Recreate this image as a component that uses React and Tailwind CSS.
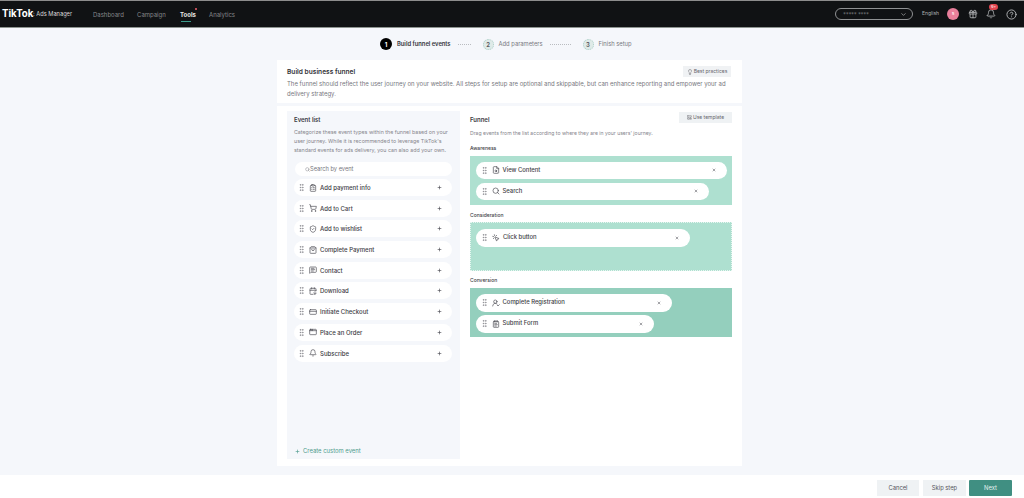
import React from "react";
import {
  ChevronDown,
  Gift,
  Bell,
  CircleHelp,
  GripVertical,
  Plus,
  X,
  Search,
  ClipboardList,
  ShoppingCart,
  ShieldCheck,
  ShoppingBag,
  MessageSquareText,
  CalendarArrowDown,
  CreditCard,
  AppWindow,
  FileSearch,
  MousePointerClick,
  UserRoundCheck,
  NotepadText,
  Lightbulb,
  LayoutTemplate,
} from "lucide-react";

const events = [
  { name: "Add payment info", icon: ClipboardList },
  { name: "Add to Cart", icon: ShoppingCart },
  { name: "Add to wishlist", icon: ShieldCheck },
  { name: "Complete Payment", icon: ShoppingBag },
  { name: "Contact", icon: MessageSquareText },
  { name: "Download", icon: CalendarArrowDown },
  { name: "Initiate Checkout", icon: CreditCard },
  { name: "Place an Order", icon: AppWindow },
  { name: "Subscribe", icon: Bell },
];

const Chip = ({ name, icon: Icon, width }) => {
  return (
    <div
      className="h-[17.5px] bg-white rounded-full flex items-center pl-[4px] pr-[11px] text-[5.9px] font-medium text-[#3c3c44]"
      style={{ width }}
    >
      <GripVertical className="w-[9px] h-[9px] text-[#8a8a90]" />
      <Icon className="w-[8px] h-[8px] ml-[3px] text-[#4a4a52]" />
      <span className="ml-[3px] flex-1">{name}</span>
      <X className="w-[4px] h-[4px] text-[#4a4a52]" strokeWidth={3} />
    </div>
  );
};

const Step = ({ num, label, active }) => {
  return (
    <div className="flex items-center gap-[5px]">
      <div
        className={
          active
            ? "w-[12px] h-[12px] rounded-full bg-black text-white text-[6px] font-bold flex items-center justify-center"
            : "w-[11px] h-[11px] rounded-full bg-[#dfeae8] border border-dotted border-[#a9cfc7] text-[#55555c] text-[6px] font-semibold flex items-center justify-center"
        }
      >
        {num}
      </div>
      <span
        className={
          active
            ? "text-[5.8px] font-semibold text-[#333338]"
            : "text-[5.8px] text-[#77777e]"
        }
      >
        {label}
      </span>
    </div>
  );
};

const App = () => {
  return (
    <div className="w-[1024px] h-[498px] flex flex-col overflow-hidden bg-white font-['Inter',sans-serif]">
      <div className="h-[28px] shrink-0 bg-[#101214] border-t border-t-[#8d8d8d] border-b border-b-[#8d9490] flex items-center pl-[2px] pr-[7px]">
        <span className="text-[9.7px] font-bold text-white w-[30px]">TikTok</span>
        <span className="text-[5.7px] text-[#d8d8d8] ml-[1px] w-[60px]">: Ads Manager</span>
        <nav className="flex items-center text-[6px] text-[#85878a] h-full">
          <span className="w-[44px]">Dashboard</span>
          <span className="w-[43px]">Campaign</span>
          <div className="relative w-[29px] h-full flex items-center">
            <span className="font-bold text-[#e8e8e8]">Tools</span>
            <div className="absolute left-[15px] top-[7px] w-[2px] h-[2px] rounded-full bg-[#f0616d]" />
            <div className="absolute left-[1px] bottom-[5px] w-[10px] h-[1.5px] bg-[#3b9a8a]" />
          </div>
          <span>Analytics</span>
        </nav>
        <div className="ml-auto flex items-center">
          <div className="w-[78px] h-[12px] rounded-full border border-[#8f9193] flex items-center justify-between pl-[7px] pr-[5px]">
            <span className="text-[6px] text-[#77797c] tracking-[-0.3px]">***** ****</span>
            <ChevronDown className="w-[7px] h-[7px] text-[#c8c8c8]" />
          </div>
          <span className="ml-[9px] w-[16px] text-[5px] text-[#b0b2b4]">English</span>
          <div className="ml-[9px] w-[12px] h-[12px] rounded-full bg-[#e87f9b] flex items-center justify-center text-[5px] text-white">
            s
          </div>
          <Gift className="ml-[9px] w-[10px] h-[10px] text-[#b8babc]" />
          <div className="relative ml-[8px]">
            <Bell className="w-[10px] h-[10px] text-[#b8babc]" />
            <div className="absolute left-[3px] top-[-5px] w-[9px] h-[6px] rounded-full bg-[#e0454f] text-[4px] text-white flex items-center justify-center">
              9+
            </div>
          </div>
          <CircleHelp className="ml-[10px] w-[11px] h-[11px] text-[#b8babc]" />
        </div>
      </div>

      <div className="flex-1 bg-[#f5f7fb] flex flex-col min-h-0">
        <div className="h-[32px] shrink-0 flex items-center pl-[380px]">
          <Step num="1" label="Build funnel events" active />
          <div className="w-[13px] ml-[7px] border-t border-dotted border-[#b9bcc0]" />
          <div className="ml-[12px]">
            <Step num="2" label="Add parameters" />
          </div>
          <div className="w-[21px] ml-[7px] border-t border-dotted border-[#b9bcc0]" />
          <div className="ml-[12px]">
            <Step num="3" label="Finish setup" />
          </div>
        </div>

        <div className="ml-[277px] w-[465px] h-[406px] flex flex-col">
          <div className="h-[43px] bg-white px-[10px] pt-[7px] relative">
            <p className="text-[6.6px] font-semibold text-[#333338] leading-[10px]">Build business funnel</p>
            <p className="mt-[2px] text-[6px] text-[#77777e] leading-[10px] w-[445px]">
              The funnel should reflect the user journey on your website. All steps for setup are optional and skippable, but can enhance reporting and empower your ad delivery strategy.
            </p>
            <div className="absolute right-[11px] top-[6px] h-[11px] w-[48px] bg-[#f0f2f4] flex items-center justify-center gap-[1px] text-[5px] text-[#66666c]">
              <Lightbulb className="w-[6px] h-[6px]" />
              Best practices
            </div>
          </div>

          <div className="mt-[3px] flex-1 bg-white flex gap-[10px] pl-[10px] pr-[10px] pt-[5px] pb-[7px]">
            <div className="w-[173px] bg-[#f5f7fb] flex flex-col pl-[7px] pr-[8px] pt-[4px] pb-[3px]">
              <p className="text-[6px] font-semibold text-[#3c3c44] leading-[10px]">Event list</p>
              <p className="mt-[3px] text-[5.3px] text-[#85858c] leading-[9px] w-[160px]">
                Categorize these event types within the funnel based on your user journey. While it is recommended to leverage TikTok's standard events for ads delivery, you can also add your own.
              </p>
              <div className="mt-[7px] ml-[1px] h-[14px] bg-white rounded-full flex items-center pl-[10px] text-[5.7px] text-[#77777e]">
                <Search className="w-[5px] h-[5px]" />
                Search by event
              </div>
              <div className="mt-[3px] flex flex-col gap-[3.7px]">
                {events.map((item) => (
                  <div
                    key={item.name}
                    className="h-[17px] bg-white rounded-full flex items-center pl-[3px] pr-[10px] text-[6px] font-medium text-[#3c3c44]"
                  >
                    <GripVertical className="w-[9px] h-[9px] text-[#8a8a90]" />
                    <item.icon className="w-[8px] h-[8px] ml-[3px] text-[#4a4a52]" />
                    <span className="ml-[3px] flex-1">{item.name}</span>
                    <Plus className="w-[5px] h-[5px] text-[#4a4a52]" strokeWidth={3} />
                  </div>
                ))}
              </div>
              <div className="mt-auto pl-[1px] flex items-center gap-[3px] text-[5.9px] text-[#4f9c8d] leading-[10px]">
                <Plus className="w-[5px] h-[5px]" strokeWidth={3} />
                Create custom event
              </div>
            </div>

            <div className="flex-1 flex flex-col">
              <div className="flex items-start justify-between h-[12px] mt-[1px]">
                <span className="text-[6px] font-semibold text-[#3c3c44] leading-[10px] pt-[3px]">Funnel</span>
                <div className="h-[11px] w-[53px] bg-[#eff2f4] flex items-center justify-center gap-[1px] text-[5px] text-[#66666c]">
                  <LayoutTemplate className="w-[5px] h-[5px]" />
                  Use template
                </div>
              </div>
              <p className="mt-[5px] text-[5.1px] text-[#85858c] leading-[9px]">
                Drag events from the list according to where they are in your users' journey.
              </p>
              <p className="mt-[6px] text-[5px] font-medium text-[#3c3c44] leading-[8px]">Awareness</p>
              <div className="mt-[4px] h-[49px] bg-[#aee0d0] flex flex-col gap-[3.5px] pl-[5.5px] pt-[5.5px]">
                <Chip name="View Content" icon={FileSearch} width={251} />
                <Chip name="Search" icon={Search} width={233} />
              </div>
              <p className="mt-[6px] text-[5px] font-medium text-[#3c3c44] leading-[8px]">Consideration</p>
              <div className="mt-[3px] h-[49px] bg-[#aee0d0] border border-dotted border-[#e8f6f1] flex flex-col pl-[5px] pt-[6px]">
                <Chip name="Click button" icon={MousePointerClick} width={214} />
              </div>
              <p className="mt-[5px] text-[5px] font-medium text-[#3c3c44] leading-[8px]">Conversion</p>
              <div className="mt-[4px] h-[49px] bg-[#94cfbd] flex flex-col gap-[3.5px] pl-[5.5px] pt-[6px]">
                <Chip name="Complete Registration" icon={UserRoundCheck} width={196} />
                <Chip name="Submit Form" icon={NotepadText} width={178} />
              </div>
            </div>
          </div>
        </div>
      </div>

      <div className="h-[23px] shrink-0 bg-white flex items-start justify-end pr-[12px] pt-[5px]">
        <div className="w-[42px] h-[16px] bg-[#eff2f4] flex items-center justify-center text-[5.8px] text-[#55555c]">Cancel</div>
        <div className="ml-[4px] w-[43px] h-[16px] bg-[#eff2f4] flex items-center justify-center text-[5.8px] text-[#55555c]">Skip step</div>
        <div className="ml-[3px] w-[43px] h-[16px] rounded-[1px] bg-[#408f82] flex items-center justify-center text-[5.8px] text-[#e6f2f0]">Next</div>
      </div>
    </div>
  );
};

export default App;
